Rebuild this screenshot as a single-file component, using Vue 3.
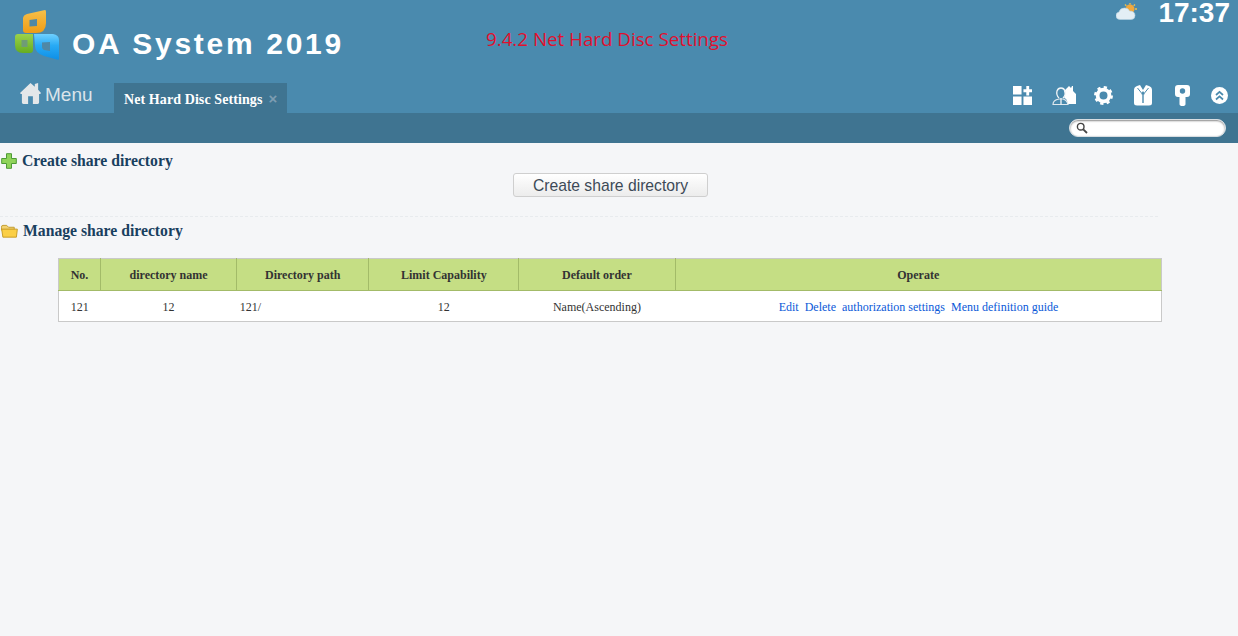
<script setup>
const cols = [
  { t: 'No.', w: 42 },
  { t: 'directory name', w: 136 },
  { t: 'Directory path', w: 132 },
  { t: 'Limit Capability', w: 150 },
  { t: 'Default order', w: 156 },
  { t: 'Operate', w: 486 }
]
const links = ['Edit', 'Delete', 'authorization settings', 'Menu definition guide']
</script>

<template>
  <div class="page">
    <header class="top">
      <div class="brand">
        <svg class="logo" width="52" height="54" viewBox="0 0 52 54">
          <defs>
            <linearGradient id="lgO" x1="0" y1="0" x2="0" y2="1">
              <stop offset="0" stop-color="#f6c04a"/>
              <stop offset="1" stop-color="#ef9c16"/>
            </linearGradient>
            <linearGradient id="lgG" x1="0" y1="0" x2="0" y2="1">
              <stop offset="0" stop-color="#9bd24a"/>
              <stop offset="1" stop-color="#66ad22"/>
            </linearGradient>
            <linearGradient id="lgB" x1="0" y1="0" x2="0" y2="1">
              <stop offset="0" stop-color="#6fd0ff"/>
              <stop offset="0.45" stop-color="#28aaf5"/>
              <stop offset="1" stop-color="#0e8fe6"/>
            </linearGradient>
          </defs>
          <path d="M9 8 Q9.500 5 13 4 L31 0 Q32 0 32 2 L32 13 Q32 23 22 23 L12 23 Q9 23 9 20 Z" fill="url(#lgO)"/>
          <path d="M15.500 10 L23 9 L23 16 L15.500 16.500 Z" fill="#4f88a6"/>
          <path d="M1 27 Q1 24 4 24 L19 24 L19 40 Q19 43 16 43 L9 43 Q1 43 1 35 Z" fill="url(#lgG)"/>
          <path d="M7.500 30 L13.500 30 L13.500 37 L7.500 37 Z" fill="#6f9c76"/>
          <path d="M20 24 L39 24 Q45 25 45 30 L45 49 Q45 50 43 49.500 L30 46 Q21 43 21 36 Z" fill="url(#lgB)"/>
          <path d="M28 32.500 L36 32 L36 41 L30 40 Q28 39 28 37 Z" fill="#4f88a6"/>
        </svg>
        <span class="title">OA System 2019</span>
      </div>
      <div class="notice">9.4.2 Net Hard Disc Settings</div>
      <div class="clock">
        <svg class="weather" width="21" height="17" viewBox="0 0 21 17">
          <circle cx="14" cy="6" r="4.500" fill="#f2a83c"/>
          <path d="M14 0v1.500M9 1.500l1.300 1.300M19 1.500l-1.300 1.300M21 6h-2" stroke="#f4c04a" stroke-width="1.300"/>
          <path d="M4 16.500 Q0 16.500 0 12.500 Q0 9.500 3 9 Q4 5 8.500 5 Q12.500 5 13.500 8 Q19 8 19 12.500 Q19 16.500 15 16.500 Z" fill="#e3eef5" stroke="#b9d3e2" stroke-width="0.600"/>
        </svg>
        <span class="time">17:37</span>
      </div>
      <nav class="nav">
        <div class="menu">
          <svg width="21" height="23" viewBox="0 0 22 24">
            <path d="M11 1 L15.500 5 L15.500 2 L19 1 L19 8 L22 11.500 Q21.500 13 20 12.500 L20 21.500 Q20 23 18.500 23 L13.500 23 L13.500 15 L8.500 15 L8.500 23 L3.500 23 Q2 23 2 21.500 L2 12.500 Q.5 13 0 11.500 Z" fill="#e4e7e9"/>
          </svg>
          <span>Menu</span>
        </div>
        <div class="tab">
          <span>Net Hard Disc Settings</span>
          <b class="x">×</b>
        </div>
        <div class="tools">
          <svg width="19" height="19" viewBox="0 0 20 20">
            <path d="M0 0h9v9H0zM11 11h9v9h-9zM0 11h9v9H0z" fill="#fff"/>
            <path d="M14 0h3v3.500h3v3h-3V10h-3V6.500h-3v-3h3z" fill="#fff"/>
          </svg>
          <svg width="24" height="21" viewBox="0 0 24 21">
            <path d="M12 6 L17 1 L19 3 L20 1 L21 1 L21 6 L24 9 L24 19 L15 19 Q16 14 12 13 Q14 10 12 6 Z" fill="#fff"/>
            <path d="M7 13 Q4 10 5 6 Q6 3 9 3 Q12 3 13 6 Q14 10 11 13" fill="none" stroke="#f2f5f7" stroke-width="1.300"/>
            <path d="M1 19.500 Q1 15 7 14 L11 14 Q15 15 16 19.500 Z" fill="none" stroke="#dfe8ee" stroke-width="1.200"/>
            <path d="M9 13v7" stroke="#e8eef2" stroke-width="1.400"/>
          </svg>
          <svg width="19" height="19" viewBox="0 0 20 20">
            <circle cx="10" cy="10" r="6.200" fill="none" stroke="#fff" stroke-width="4"/>
            <circle cx="10" cy="10" r="8.700" fill="none" stroke="#fff" stroke-width="2.500" stroke-dasharray="3.400 3.430"/>
          </svg>
          <svg width="18" height="21" viewBox="0 0 18 21">
            <path d="M3 1 L6 0 L9 5 L12 0 L15 1 Q18 2 18 5 L18 18 Q18 20.500 15 20.500 L3 20.500 Q0 20.500 0 18 L0 5 Q0 2 3 1 Z" fill="#fff"/>
            <path d="M9 6 L7 9 L8.300 9.500 L8.300 18 L9.700 18 L9.700 9.500 L11 9 Z" fill="#4a8aae"/>
            <path d="M3.500 3 L7.500 8 M14.500 3 L10.500 8" stroke="#4a8aae" stroke-width="1"/>
          </svg>
          <svg width="15" height="21" viewBox="0 0 15 21">
            <path d="M3 0 L12 0 Q15 0 15 3 L15 9 Q15 12 12 12 L10.500 12 L10.500 19 Q10.500 21 7.500 21 Q4.500 21 4.500 19 L4.500 12 L3 12 Q0 12 0 9 L0 3 Q0 0 3 0 Z" fill="#fff"/>
            <circle cx="7.500" cy="6" r="2.700" fill="#4a8aae"/>
          </svg>
          <svg class="up" width="17" height="17" viewBox="0 0 17 17">
            <circle cx="8.500" cy="8.500" r="8.500" fill="#fff"/>
            <path d="M5 8 L8.500 4.800 L12 8 M5 12.500 L8.500 9.300 L12 12.500" fill="none" stroke="#4a8aae" stroke-width="1.700"/>
          </svg>
        </div>
      </nav>
    </header>
    <div class="subbar">
      <label class="search">
        <svg width="12" height="12" viewBox="0 0 12 12">
          <circle cx="4.700" cy="4.700" r="3.300" fill="none" stroke="#444" stroke-width="1.400"/>
          <path d="M7.300 7.300 L11 11" stroke="#444" stroke-width="1.800"/>
        </svg>
      </label>
    </div>
    <main class="content">
      <h2 class="head first">
        <svg width="16" height="16" viewBox="0 0 16 16">
          <path d="M5.500 .7h5v4.800h4.800v5h-4.800v4.800h-5v-4.800H.7v-5h4.800z" fill="#8fd35a" stroke="#4d9a35"/>
        </svg>
        Create share directory
      </h2>
      <div class="btnrow"><button class="btn" type="button">Create share directory</button></div>
      <div class="rule"></div>
      <h2 class="head second">
        <svg width="17" height="15" viewBox="0 0 18 15">
          <path d="M.5 3 Q.5 1 2 1 L6 1 L8 3 L14 3 L14 6 L.5 6 Z" fill="#f3d372" stroke="#c09a2e"/>
          <path d="M.7 5 L17.300 5 L16.300 13.500 L2 13.500 Z" fill="#fbcf46" stroke="#c79a22"/>
        </svg>
        Manage share directory
      </h2>
      <table class="grid">
        <colgroup>
          <col v-for="c in cols" :key="c.t" :style="{ width: c.w + 'px' }" />
        </colgroup>
        <thead>
          <tr><th v-for="c in cols" :key="c.t">{{ c.t }}</th></tr>
        </thead>
        <tbody>
          <tr>
            <td>121</td>
            <td>12</td>
            <td class="left">121/</td>
            <td>12</td>
            <td>Name(Ascending)</td>
            <td class="ops"><a v-for="l in links" :key="l" href="#">{{ l }}</a></td>
          </tr>
        </tbody>
      </table>
    </main>
  </div>
</template>

<style>
html, body { margin: 0; background: #f5f6f8; }
</style>

<style scoped>
.page {
  height: 636px;
  overflow: hidden;
  background: #f5f6f8;
  font-family: "Liberation Serif", serif;
}
.top {
  height: 113px;
  background: #4a8aae;
  display: flex;
  flex-direction: column;
  position: relative;
}
.brand {
  flex: none;
  display: flex;
  align-items: flex-start;
  height: 83px;
  padding: 10px 0 0 14px;
  box-sizing: border-box;
}
.logo { flex: none; }
.title {
  margin: 17px 0 0 6px;
  font: bold 30px/34px "Liberation Sans", sans-serif;
  letter-spacing: 2.7px;
  color: #fff;
}
.notice {
  position: absolute;
  left: 486px;
  top: 26px;
  font: 18.750px/26px "Open Sans", sans-serif;
  color: #e0102e;
  white-space: nowrap;
}
.clock {
  position: absolute;
  right: 8px;
  top: 0;
  display: flex;
  align-items: flex-start;
  gap: 21px;
}
.weather { margin-top: 3px; }
.time {
  font: bold 28px/25px "Liberation Sans", sans-serif;
  color: #fff;
}
.nav {
  flex: none;
  height: 30px;
  display: flex;
  align-items: stretch;
}
.menu {
  width: 114px;
  box-sizing: border-box;
  padding: 0 0 0 20px;
  display: flex;
  align-items: flex-start;
  gap: 4px;
  font: 19px/24px "Liberation Sans", sans-serif;
  color: #dbe4ea;
}
.menu svg { margin-top: -1px; }
.tab {
  width: 173px;
  background: #3f7491;
  box-sizing: border-box;
  padding: 8px 0 0 10px;
  font-size: 14px;
  font-weight: bold;
  line-height: 18px;
  letter-spacing: 0.09px;
  color: #fff;
  display: flex;
  gap: 6px;
  white-space: nowrap;
}
.x {
  font: bold 15px/15px "Liberation Sans", sans-serif;
  color: #7d9db2;
}
.tools {
  margin-left: auto;
  padding: 2px 10px 0 0;
  display: flex;
  align-items: flex-start;
  gap: 20px;
}
.tools svg:nth-child(1) { margin-top: 1px; }
.tools svg:nth-child(3) { margin-top: 1px; margin-left: -2px; }
.tools svg:nth-child(4) { margin-left: 1px; }
.tools svg:nth-child(5) { margin-left: 3px; }
.tools svg:nth-child(6) { margin-left: 1px; }
.up { margin-top: 2px; }
.subbar {
  height: 30px;
  background: #3f7491;
  position: relative;
  display: flex;
  justify-content: flex-end;
  align-items: center;
  padding-right: 12px;
}
.search {
  width: 157px;
  height: 18px;
  box-sizing: border-box;
  background: #fff;
  border-radius: 9px;
  border: 1px solid #d8dee2;
  box-shadow: inset 0 1px 2px #888;
  display: flex;
  align-items: center;
  padding-left: 6px;
}
.content {
  display: flex;
  flex-direction: column;
}
.head {
  margin: 0;
  display: flex;
  align-items: center;
  gap: 5px;
  height: 20px;
  padding-left: 1px;
  font-size: 15.700px;
  font-weight: bold;
  color: #19405f;
  white-space: nowrap;
}
.first { margin-top: 8px; }
.second { margin-top: 4px; }
.btnrow {
  display: flex;
  justify-content: center;
  margin-top: 2px;
  padding-right: 17px;
}
.btn {
  width: 195px;
  height: 24px;
  padding: 1px 0 0;
  border: 1px solid #cfcfcf;
  border-radius: 3px;
  background: linear-gradient(#fff, #ececec);
  font: 15.700px/20px "Liberation Sans", sans-serif;
  color: #3d4a57;
}
.rule {
  width: 1158px;
  margin-top: 19px;
  border-top: 1px dashed #e8ebee;
}
.grid {
  margin: 17px 0 0 58px;
  width: 1104px;
  table-layout: fixed;
  border-collapse: collapse;
  border: 1px solid #c9c9c9;
  background: #fff;
  font-size: 12px;
  color: #333;
}
th {
  height: 32px;
  padding: 1px 0 0;
  box-sizing: border-box;
  background: #c5de84;
  border-left: 1px solid #a3bb68;
  border-bottom: 1px solid #a3bb68;
  font-weight: bold;
}
th:first-child { border-left: 0; }
td {
  height: 31px;
  padding: 3px 0 0;
  box-sizing: border-box;
  text-align: center;
}
td.left { text-align: left; padding-left: 3px; }
td.ops { padding-left: 1px; }
.ops a {
  margin: 0 3px;
  color: #0a59d8;
  text-decoration: none;
}
</style>
